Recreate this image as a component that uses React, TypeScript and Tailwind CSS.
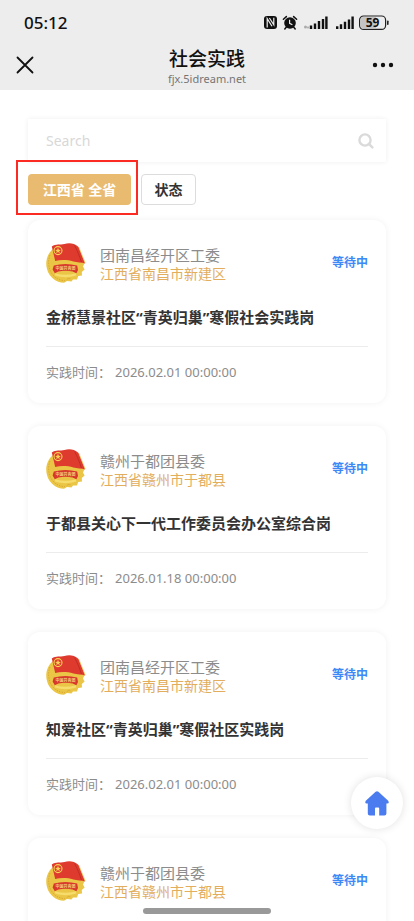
type Post = {
  id: number;
  org: string;
  area: string;
  title?: string;
  time?: string;
};

const posts: Post[] = [
  {
    id: 1,
    org: '团南昌经开区工委',
    area: '江西省南昌市新建区',
    title: '金桥慧景社区“青英归巢”寒假社会实践岗',
    time: '2026.02.01 00:00:00',
  },
  {
    id: 2,
    org: '赣州于都团县委',
    area: '江西省赣州市于都县',
    title: '于都县关心下一代工作委员会办公室综合岗',
    time: '2026.01.18 00:00:00',
  },
  {
    id: 3,
    org: '团南昌经开区工委',
    area: '江西省南昌市新建区',
    title: '知爱社区“青英归巢”寒假社区实践岗',
    time: '2026.02.01 00:00:00',
  },
  {
    id: 4,
    org: '赣州于都团县委',
    area: '江西省赣州市于都县',
  },
];

function Emblem() {
  return (
    <svg viewBox="0 0 40 40" className="w-10 h-10 flex-shrink-0" aria-hidden="true">
      {/* wheat and gear */}
      <path
        d="M7 6 C1 11 -1 19 1 26 C3 34 10 39.6 18 39.8 L21 38 L25.5 38.6 L27 36.4 L31 36.6 L32.2 33 L36 32.4 L35.8 29 L38.6 26.6 L37 23.6 L38.6 20 L30 8 Z"
        fill="#ebc646"
      />
      <path d="M4 12 C1 20 3 29 9 34 C12 36.6 16 37.6 19 37.6" fill="none" stroke="#d7a936" strokeWidth="1" strokeDasharray="1.4 1.2" />
      <path d="M9 31.4 Q19.5 34.6 30 31.4" fill="none" stroke="#f5dc6c" strokeWidth="2.4" />
      <path d="M20.5 37 L22 35.6 L24.6 35.8" fill="none" stroke="#d7a936" strokeWidth="0.8" />
      {/* flag */}
      <path
        d="M5.8 3.4 C10 0.4 14 2.2 18.4 1 C23 -0.4 28 0 32.6 4 L39.2 20.4 C35.4 19 31 19.6 27.4 18.4 C21.6 16.8 15 16.4 9.2 18 Z"
        fill="#df3a2e"
      />
      <path d="M28.6 2.6 C31 7 33.6 13 35.4 19" fill="none" stroke="#b92a22" strokeWidth="0.8" />
      <path d="M32.8 4.2 L39.2 20" stroke="#f0cb4b" strokeWidth="0.7" />
      <circle cx="12" cy="7.6" r="4" fill="none" stroke="#f6d354" strokeWidth="1.1" />
      <path d="M12 4.8 L12.8 6.8 L14.9 6.9 L13.2 8.2 L13.8 10.2 L12 9 L10.2 10.2 L10.8 8.2 L9.1 6.9 L11.2 6.8 Z" fill="#f6d354" />
      {/* ribbon */}
      <path d="M7.8 22.6 Q19.5 19.2 31.2 22.6 L32 27 L30.4 30.2 L26.6 28.6 Q19.5 27 12.4 28.6 L8.8 30.2 L6.6 26.4 Z" fill="#d8382c" />
      <text x="19.5" y="26.6" textAnchor="middle" fontSize="4" fontWeight="700" fill="#f3cf7a">
        中国共青团
      </text>
    </svg>
  );
}

function StatusIcons() {
  return (
    <svg viewBox="0 0 126 16" className="w-[126px] h-4" aria-hidden="true">
      {/* nfc */}
      <rect x="0" y="1" width="13" height="13" rx="3" fill="#111" />
      <path d="M3.2 12.4 V3.6 L8 11.2 M5.4 3 L9.8 9.8 V2.8" fill="none" stroke="#ededed" strokeWidth="1.2" />
      {/* alarm */}
      <circle cx="26" cy="8" r="5.8" fill="#111" />
      <path d="M19.4 4.2 L22.4 1.6 M32.6 4.2 L29.6 1.6 M22.4 12 L20.8 14 M29.6 12 L31.2 14" stroke="#111" strokeWidth="1.5" strokeLinecap="round" />
      <path d="M25.6 4.8 V8.4 L28.4 9.8" fill="none" stroke="#ededed" strokeWidth="1.2" />
      {/* signal */}
      <circle cx="41.5" cy="12" r="1.5" fill="#aaa" />
      <path d="M44 13.4 V11.6" stroke="#777" strokeWidth="1" />
      <path d="M47 14 V10.6 M51 14 V8.4 M55 14 V6 M59 14 V4 M62.4 14 V1.4" stroke="#111" strokeWidth="2.4" />
      <path d="M73.2 14 V11.2 M77 14 V9.2 M81 14 V6.8 M85 14 V4.4 M88.6 14 V1.4" stroke="#111" strokeWidth="2.4" />
      {/* battery */}
      <rect x="95.6" y="1" width="26" height="13.4" rx="4" fill="#ededed" stroke="#222" strokeWidth="1.2" />
      <path d="M99.6 2 H112 V13.4 H99.6 Q96.6 13.4 96.6 10.4 V5 Q96.6 2 99.6 2 Z" fill="#c4c4c4" />
      <rect x="123" y="5.4" width="1.6" height="4.6" rx="0.8" fill="#222" />
      <text x="108.6" y="12" textAnchor="middle" fontSize="12" fontWeight="700" fill="#111">
        59
      </text>
    </svg>
  );
}

function Header() {
  return (
    <header className="bg-[#ededed] h-[90px] flex-shrink-0 text-[#111]">
      <div className="h-[45px] px-6 flex items-center justify-between">
        <span className="text-[17px] font-medium leading-5">05:12</span>
        <StatusIcons />
      </div>
      <div className="grid grid-cols-[1fr_auto_1fr] items-center px-4">
        <button type="button" aria-label="关闭" className="justify-self-start">
          <svg viewBox="0 0 18 18" className="w-[18px] h-[18px]" fill="none" stroke="#111" strokeWidth="1.8" strokeLinecap="round">
            <path d="M1.5 1.5 L16.5 16.5 M16.5 1.5 L1.5 16.5" />
          </svg>
        </button>
        <div className="text-center">
          <h1 className="text-[19px] leading-7 font-medium">社会实践</h1>
          <div className="text-[11px] leading-3 text-[#757575]">fjx.5idream.net</div>
        </div>
        <button type="button" aria-label="更多" className="justify-self-end pr-1">
          <svg viewBox="0 0 22 6" className="w-[22px] h-1.5" fill="#111">
            <circle cx="3" cy="3" r="2.2" />
            <circle cx="11" cy="3" r="2.2" />
            <circle cx="19" cy="3" r="2.2" />
          </svg>
        </button>
      </div>
    </header>
  );
}

export default function App() {
  return (
    <div
      className="relative h-screen flex flex-col overflow-hidden bg-white"
      style={{ fontFamily: '"Noto Sans", "Noto Sans CJK SC", sans-serif' }}
    >
      <Header />

      <main className="flex-1 min-h-0 overflow-hidden px-7 pt-[29px]">
        <label className="h-[43px] flex items-center bg-white pl-[18px] pr-3 shadow-[0_0_5px_rgba(0,0,0,0.07)]">
          <input
            type="search"
            placeholder="Search"
            aria-label="Search"
            className="flex-1 min-w-0 text-sm text-[#333] placeholder:text-[#d8d8d8] outline-none"
          />
          <svg viewBox="0 0 16 16" className="w-4 h-4" fill="none" stroke="#dadada" strokeWidth="2.4" strokeLinecap="round" aria-hidden="true">
            <circle cx="7" cy="7" r="5.6" />
            <path d="M11.6 11.6 L14.4 14.4" />
          </svg>
        </label>

        <div className="mt-3 flex gap-[10px]">
          <div className="relative">
            <button type="button" className="h-[31px] w-[103px] rounded bg-[#e9bb70] text-white text-sm font-bold whitespace-nowrap">
              江西省 全省
            </button>
            <div className="absolute -top-[14px] -bottom-[10px] -left-3 -right-[7px] border-2 border-[#fb2a22] pointer-events-none" />
          </div>
          <button type="button" className="h-[31px] w-[55px] rounded border border-[#dcdcdc] bg-white text-[#333] text-sm font-bold">
            状态
          </button>
        </div>

        <div className="mt-[15px] space-y-[23px]">
          {posts.map((post) => (
            <article key={post.id} className="min-h-[183px] bg-white rounded-xl px-[18px] pt-[23px] pb-[21px] shadow-[0_0_7px_rgba(0,0,0,0.06)]">
              <div className="flex items-center">
                <Emblem />
                <div className="ml-[14px] pt-0.5 flex-1 min-w-0">
                  <div className="text-[15px] leading-5 text-[#8c8c8c]">{post.org}</div>
                  <div className="text-sm leading-[18px] text-[#e2ad5c]">{post.area}</div>
                </div>
                <span className="text-xs font-bold text-[#3d8af7]">等待中</span>
              </div>
              {post.title && (
                <h2 className="mt-[22px] text-[15px] leading-6 font-bold text-[#333] whitespace-nowrap">{post.title}</h2>
              )}
              {post.time && (
                <div className="mt-[17px] pt-[15px] border-t border-[#ececec] text-[13px] leading-5 text-[#8c8c8c]">
                  实践时间：<time className="ml-1">{post.time}</time>
                </div>
              )}
            </article>
          ))}
        </div>
      </main>

      <a
        href="#home"
        aria-label="首页"
        className="absolute right-[11px] bottom-[92px] w-[52px] h-[52px] rounded-full bg-white flex items-center justify-center shadow-[0_0_8px_rgba(0,0,0,0.12)]"
      >
        <svg viewBox="0 0 24 25" className="w-6 h-[25px]" fill="#4a7cf0" aria-hidden="true">
          <path d="M10.6 0.8 Q12 -0.2 13.4 0.8 L23.2 9.8 Q24.6 12.4 22.4 12.6 H21.4 V22.6 Q21.4 24.6 19.4 24.6 H14.2 V17.6 Q14.2 16.6 13.2 16.6 H11 Q10 16.6 10 17.6 V24.6 H4.8 Q2.8 24.6 2.8 22.6 V12.6 H1.6 Q-0.6 12.4 0.8 9.8 Z" />
        </svg>
      </a>

      <div className="absolute bottom-[7px] left-1/2 -translate-x-1/2 w-[128px] h-1.5 rounded-full bg-[#999]" />
    </div>
  );
}
